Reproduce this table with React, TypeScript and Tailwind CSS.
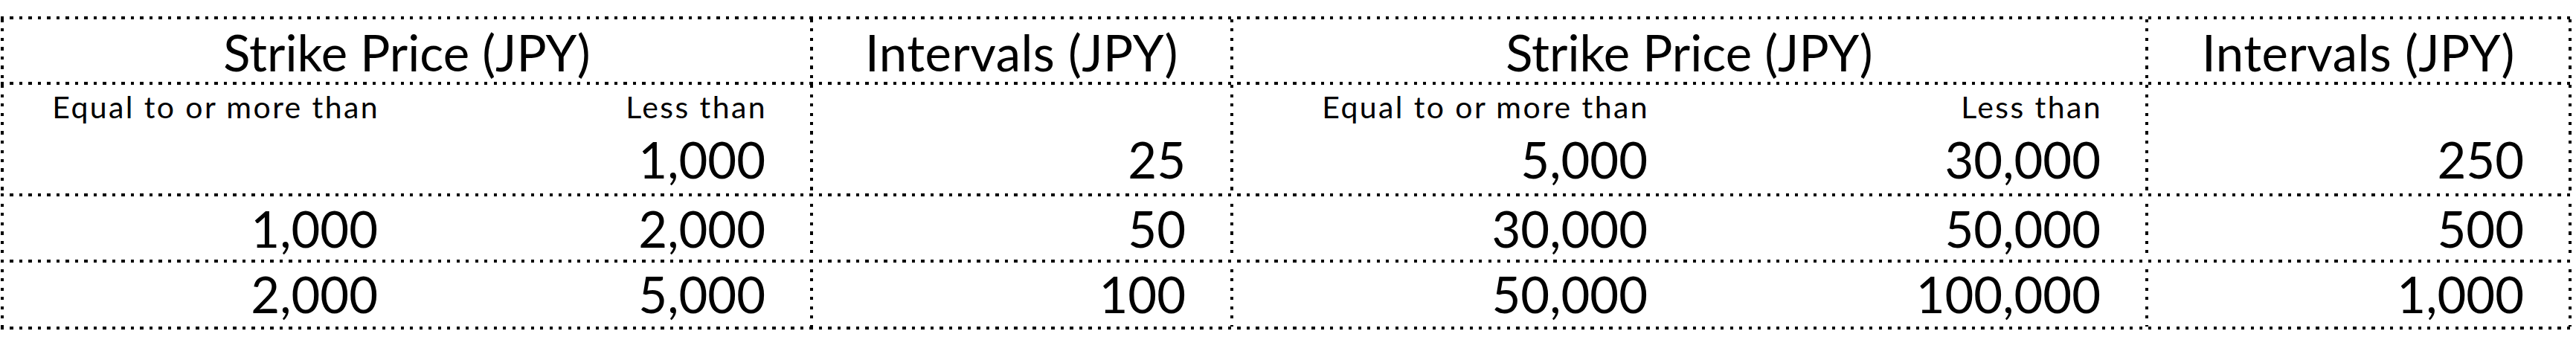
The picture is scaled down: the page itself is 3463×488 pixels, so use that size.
import React from "react";

const hLine = "h-[4px] w-full bg-[repeating-linear-gradient(90deg,#000_0_4px,transparent_4px_12.5px)]";
const vLine = "w-[4px] shrink-0 self-stretch bg-[repeating-linear-gradient(180deg,#000_0_4px,transparent_4px_12.5px)]";

const rows = [
    { a: "", b: "1,000", i: "25", c: "5,000", d: "30,000", j: "250" },
    { a: "1,000", b: "2,000", i: "50", c: "30,000", d: "50,000", j: "500" },
    { a: "2,000", b: "5,000", i: "100", c: "50,000", d: "100,000", j: "1,000" },
];

const num = "text-right text-[67px] leading-none pr-[60px]";
const label = "text-right text-[41px] leading-none tracking-[2.4px] pr-[58px]";

const App = () => {
    const [first, ...rest] = rows;

    return (
        <div className="min-h-[488px] bg-white pt-[22px] pl-[1px] text-black [font-family:Lato,sans-serif]">
            <div className="flex w-[3456px] flex-col">
                <div className={hLine}></div>

                {/* header */}
                <div className="flex h-[84px]">
                    <div className={vLine}></div>
                    <div className="w-[1084px] pt-[11px] text-center text-[67px] leading-none">Strike Price (JPY)</div>
                    <div className={vLine}></div>
                    <div className="w-[561px] pt-[11px] text-center text-[67px] leading-none tracking-[0.5px]">Intervals (JPY)</div>
                    <div className={vLine}></div>
                    <div className="w-[1226px] pt-[11px] text-center text-[67px] leading-none">Strike Price (JPY)</div>
                    <div className={vLine}></div>
                    <div className="w-[565px] pt-[11px] text-center text-[67px] leading-none tracking-[0.5px]">Intervals (JPY)</div>
                    <div className={vLine}></div>
                </div>
                <div className={hLine}></div>

                {/* first row with sub labels */}
                <div className="flex h-[146px]">
                    <div className={vLine}></div>
                    <div className="flex w-[1084px] pt-[9px]">
                        <div className="flex w-[563px] flex-col">
                            <div className={label}>Equal to or more than</div>
                            <div className={`${num} mt-[17px]`}>{first.a}</div>
                        </div>
                        <div className="flex w-[521px] flex-col">
                            <div className={label}>Less than</div>
                            <div className={`${num} mt-[17px]`}>{first.b}</div>
                        </div>
                    </div>
                    <div className={vLine}></div>
                    <div className="flex w-[561px] flex-col pt-[9px]">
                        <div className="h-[41px]"></div>
                        <div className={`${num} mt-[17px]`}>{first.i}</div>
                    </div>
                    <div className={vLine}></div>
                    <div className="flex w-[1226px] pt-[9px]">
                        <div className="flex w-[617px] flex-col">
                            <div className={label}>Equal to or more than</div>
                            <div className={`${num} mt-[17px]`}>{first.c}</div>
                        </div>
                        <div className="flex w-[609px] flex-col">
                            <div className={label}>Less than</div>
                            <div className={`${num} mt-[17px]`}>{first.d}</div>
                        </div>
                    </div>
                    <div className={vLine}></div>
                    <div className="flex w-[565px] flex-col pt-[9px]">
                        <div className="h-[41px]"></div>
                        <div className={`${num} mt-[17px]`}>{first.j}</div>
                    </div>
                    <div className={vLine}></div>
                </div>
                <div className={hLine}></div>

                {rest.map((r, idx) => (
                    <React.Fragment key={idx}>
                        <div className={`flex ${idx === 0 ? "h-[85px] pt-[10px]" : "h-[86px] pt-[9px]"}`}>
                            <div className={vLine}></div>
                            <div className={`w-[563px] ${num}`}>{r.a}</div>
                            <div className={`w-[521px] ${num}`}>{r.b}</div>
                            <div className={vLine}></div>
                            <div className={`w-[561px] ${num}`}>{r.i}</div>
                            <div className={vLine}></div>
                            <div className={`w-[617px] ${num}`}>{r.c}</div>
                            <div className={`w-[609px] ${num}`}>{r.d}</div>
                            <div className={vLine}></div>
                            <div className={`w-[565px] ${num}`}>{r.j}</div>
                            <div className={vLine}></div>
                        </div>
                        <div className={hLine}></div>
                    </React.Fragment>
                ))}
            </div>
        </div>
    );
};

export default App;
